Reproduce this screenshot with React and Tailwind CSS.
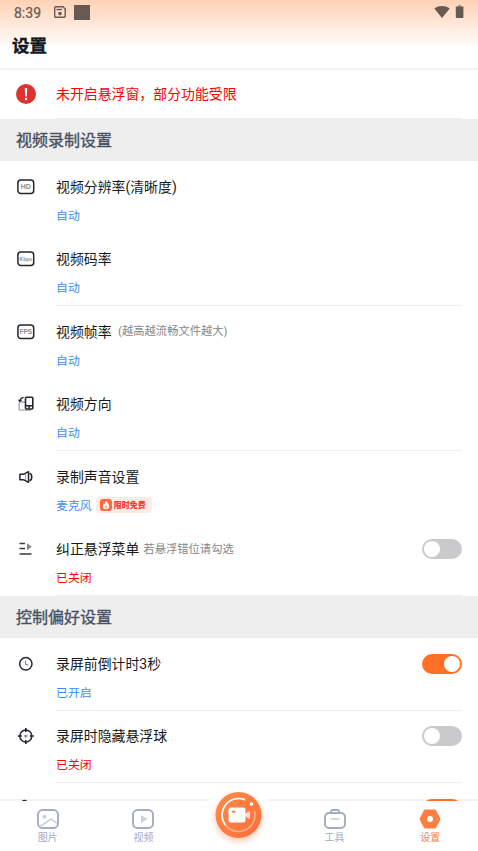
import React, { useState } from 'react';

const BoxIcon = ({ text, size = 6.5 }) => (
  <svg width="18" height="16" viewBox="0 0 18 16" fill="none">
    <rect x=".9" y="1" width="15.800" height="13.600" rx="3" stroke="#22262d" strokeWidth="1.500" />
    <text
      x="8.8"
      y={7.9 + size * 0.36}
      textAnchor="middle"
      fontSize={size}
      fontFamily="Liberation Sans, sans-serif"
      fontWeight="700"
      fill="#8a8d92"
    >
      {text}
    </text>
  </svg>
);

const RotateIcon = () => (
  <svg width="18" height="16" viewBox="0 0 18 16" fill="none">
    <path d="M8 6H3.200a1 1 0 0 0-1 1v6.200a1 1 0 0 0 1 1H14" stroke="#a3a5a9" strokeWidth="1.300" />
    <path d="M3 4.800C3.300 3 4.700 1.500 6.600 1.300M1.500 3.800l1.500 1.600 1.500-1.600" stroke="#22262d" strokeWidth="1.300" />
    <rect x="8.500" y="1.300" width="7.300" height="11.700" rx="1" stroke="#22262d" strokeWidth="1.600" />
    <path d="M8.500 9.700h7.300M12.100 10v2.500" stroke="#22262d" strokeWidth="1.500" />
  </svg>
);

const SpeakerIcon = () => (
  <svg width="18" height="16" viewBox="0 0 18 16" fill="none">
    <path d="M2.900 5.300h3.400l5.200-2.600v10.600l-5.200-2.600H2.900z" stroke="#22262d" strokeWidth="1.500" strokeLinejoin="round" />
    <path d="M12.500 4.200c3 1 3 6.600 0 7.600" stroke="#22262d" strokeWidth="1.600" />
    <path d="M8.500 5v6" stroke="#a3a5a9" strokeWidth="1" />
  </svg>
);

const MenuIcon = () => (
  <svg width="18" height="16" viewBox="0 0 18 16" fill="none">
    <path d="M2.500 2.500h5.500M2.500 7.500h5.500M2.500 13h12" stroke="#3a3d43" strokeWidth="1.400" />
    <path d="M10 2.200v7l4.800-3.500z" fill="#85878c" />
  </svg>
);

const ClockIcon = () => (
  <svg width="18" height="16" viewBox="0 0 18 16" fill="none">
    <circle cx="8.800" cy="7.800" r="6.200" stroke="#22262d" strokeWidth="1.500" />
    <path d="M8.500 4.500v3.800l2.800 1" stroke="#8a8d92" strokeWidth="1.100" />
  </svg>
);

const TargetIcon = () => (
  <svg width="18" height="16" viewBox="0 0 18 16" fill="none" overflow="visible">
    <circle cx="8.800" cy="8" r="6" stroke="#22262d" strokeWidth="1.500" />
    <path d="M8.800 0v4M8.800 12v4M.8 8h4M12.800 8h4" stroke="#22262d" strokeWidth="1.600" />
    <circle cx="8.800" cy="8" r="1.600" fill="#8a8d92" />
  </svg>
);

const TouchIcon = () => (
  <svg width="18" height="16" viewBox="0 0 18 16" fill="none" overflow="visible">
    <path d="M5.500 13V1.500a2 2 0 0 1 4 0V7l5 1.500V14" stroke="#22262d" strokeWidth="1.600" />
  </svg>
);

const videoSettings = [
  { title: '视频分辨率(清晰度)', value: '自动', icon: <BoxIcon text="HD" size={7} /> },
  { title: '视频码率', value: '自动', icon: <BoxIcon text="Kbps" size={5} />, divider: true },
  { title: '视频帧率', note: '(越高越流畅文件越大)', noteClass: 'ml-[6.5px]', value: '自动', icon: <BoxIcon text="FPS" size={6.5} /> },
  { title: '视频方向', value: '自动', icon: <RotateIcon />, divider: true },
  { title: '录制声音设置', value: '麦克风', icon: <SpeakerIcon />, badge: '限时免费' },
  { title: '纠正悬浮菜单', note: '若悬浮错位请勾选', noteClass: 'ml-1', value: '已关闭', icon: <MenuIcon />, toggle: false, divider: true },
];

const controlSettings = [
  { title: '录屏前倒计时3秒', value: '已开启', icon: <ClockIcon />, toggle: true, divider: true },
  { title: '录屏时隐藏悬浮球', value: '已关闭', icon: <TargetIcon />, toggle: false, divider: true },
  { title: '', value: '', icon: <TouchIcon />, toggle: true },
];

const Toggle = ({ initial }) => {
  const [on, setOn] = useState(initial);
  return (
    <button
      onClick={() => setOn(!on)}
      className={`flex h-5 w-10 shrink-0 items-center rounded-full px-[2px] ${
        on ? 'justify-end bg-[#ff6f26]' : 'justify-start bg-[#c9cacc]'
      }`}
    >
      <span className="h-4 w-4 rounded-full bg-white" />
    </button>
  );
};

const FreeBadge = ({ text }) => (
  <span className="mb-px ml-1 flex h-4 w-[56px] items-center gap-[2px] rounded bg-[#feebe6] pl-1">
    <svg width="12" height="12" viewBox="0 0 12 12">
      <rect width="12" height="12" rx="3" fill="#fb6b3d" />
      <path d="M6.300 1.800c.2 1.600 2.900 2.900 2.900 5.200A3.200 3.200 0 0 1 6 10.200 3.200 3.200 0 0 1 2.800 7c0-1.200.7-1.900 1.200-2.500.2.500.4.800.8.900 0-1.500.4-2.800 1.500-3.600z" fill="#fff" />
      <path d="M6 6.200c.8.800 1.200 1.300 1.200 2a1.200 1.200 0 0 1-2.400 0c0-.7.4-1.200 1.200-2z" fill="#fda78c" />
    </svg>
    <span className="pt-px text-[8px] leading-none font-black text-[#f33b2e]">{text}</span>
  </span>
);

const SettingRow = ({ item }) => (
  <div className="flex h-[72.5px] pr-4 pl-[17px]">
    <div className="w-[39px] shrink-0 pt-[17.5px]">{item.icon}</div>
    <div className={`flex-1 border-b pt-[15.5px] ${item.divider ? 'border-[#eeeeee]' : 'border-transparent'}`}>
      <div className="flex h-5 items-center">
        <span className="pt-px text-[13.9px] text-[#171a20]">{item.title}</span>
        {item.note && (
          <span className={`pt-[2px] text-[11.3px] text-[#868686] ${item.noteClass}`}>{item.note}</span>
        )}
        {item.toggle !== undefined && (
          <span className="ml-auto flex">
            <Toggle initial={item.toggle} />
          </span>
        )}
      </div>
      <div className="mt-[11px] flex h-4 items-center">
        <span className={`pt-[2px] text-[11.9px] ${item.value === '已关闭' ? 'text-[#ff0000]' : 'text-[#3c8ff2]'}`}>
          {item.value}
        </span>
        {item.badge && <FreeBadge text={item.badge} />}
      </div>
    </div>
  </div>
);

const Section = ({ title, items }) => (
  <section>
    <h2 className="flex h-[42px] items-center bg-[#eeeeee] px-4 pt-px text-base text-[#485163] [-webkit-text-stroke:0.35px_#485163]">
      {title}
    </h2>
    {items.map((item, i) => (
      <SettingRow key={i} item={item} />
    ))}
  </section>
);

const StatusBar = () => (
  <div className="flex h-6 items-center pr-[13px] pl-[14px] text-[#665a52]">
    <span className="w-10 pt-px font-[Roboto] text-sm leading-none [-webkit-text-stroke:0.2px]">8:39</span>
    <svg width="12" height="12" viewBox="0 0 12 12" fill="none" stroke="currentColor">
      <path d="M1.700.800h7.300l2.200 2.200v7.200a1 1 0 0 1-1 1H1.700a1 1 0 0 1-1-1V1.800a1 1 0 0 1 1-1z" strokeWidth="1.400" />
      <path d="M2.500 3.500h5.500" strokeWidth="1.400" />
      <circle cx="6" cy="7.600" r="1.800" fill="currentColor" stroke="none" />
    </svg>
    <span className="ml-2 h-[15px] w-[15.5px] bg-[#665a52]" />
    <svg className="ml-auto" width="16" height="13" viewBox="0 0 16 13" fill="currentColor">
      <path d="M8 12L.3 2.500C4.500-.8 11.500-.8 15.700 2.500z" />
    </svg>
    <svg className="mr-px ml-[5px]" width="9" height="14" viewBox="0 0 9 14" fill="currentColor">
      <path d="M3 0h3v2H3z" opacity=".5" />
      <rect x=".800" y="1.500" width="7.600" height="11.500" rx=".7" />
    </svg>
  </div>
);

const ImageIcon = () => (
  <svg width="22" height="20" viewBox="0 0 22 20" fill="none">
    <rect x="1" y="1" width="20" height="18" rx="4.500" stroke="#a2adc4" strokeWidth="1.900" />
    <circle cx="7.500" cy="7.800" r="2" fill="#c8cedb" />
    <path d="M3.500 17l11-7 6 5" stroke="#c8cedb" strokeWidth="1.500" />
  </svg>
);

const VideoIcon = () => (
  <svg width="22" height="20" viewBox="0 0 22 20" fill="none">
    <rect x="1" y="1" width="20" height="18" rx="4.500" stroke="#a2adc4" strokeWidth="1.900" />
    <path d="M9 6v8l6.500-4z" fill="#ccd2de" />
  </svg>
);

const ToolsIcon = () => (
  <svg width="22" height="20" viewBox="0 0 22 20" fill="none">
    <rect x="1" y="4" width="20" height="15" rx="4" stroke="#a2adc4" strokeWidth="1.900" />
    <path d="M7 4V2.500C7 1.500 7.500 1 8.500 1h5c1 0 1.500.5 1.500 1.500V4" stroke="#a2adc4" strokeWidth="1.900" />
    <path d="M6.500 10h9" stroke="#ccd2de" strokeWidth="1.700" />
  </svg>
);

const SettingsIcon = () => (
  <svg width="22" height="20" viewBox="0 0 22 20">
    <path d="M6.500.5h9c.8 0 1.300.3 1.700 1l3.800 7.200c.4.900.4 1.700 0 2.600l-3.800 7.200c-.4.700-.9 1-1.700 1h-9c-.8 0-1.300-.3-1.700-1L1 11.300c-.4-.9-.4-1.700 0-2.600l3.800-7.200c.4-.7.900-1 1.700-1z" fill="#fc7e42" />
    <circle cx="11" cy="10" r="3" fill="#fff" />
  </svg>
);

const NavItem = ({ icon, label, active }) => (
  <button className={`flex flex-1 flex-col items-center pt-2 ${active ? 'text-[#fc7e42]' : 'text-[#a2adc4]'}`}>
    {icon}
    <span className="mt-[2px] text-[10px] leading-[13px]">{label}</span>
  </button>
);

const RecordButton = () => (
  <div className="flex flex-1 justify-center">
    <button className="-mt-[15px] h-[60px] w-[60px] shrink-0">
      <svg width="60" height="60" viewBox="0.5 0 60 60" fill="none">
        <defs>
          <radialGradient id="glow">
            <stop offset=".75" stopColor="#fb6b35" stopOpacity=".25" />
            <stop offset="1" stopColor="#fb6b35" stopOpacity="0" />
          </radialGradient>
          <linearGradient id="disc" x1="0" y1="0" x2="1" y2="1">
            <stop stopColor="#ff8c48" />
            <stop offset="1" stopColor="#fb6d3b" />
          </linearGradient>
        </defs>
        {/* raised edge of the bar behind the button */}
        <path d="M0 14C9 13 11 0 30 0s21 13 30 14v3H0z" fill="#fff" />
        <circle cx="30" cy="32" r="28" fill="url(#glow)" />
        <circle cx="30" cy="29" r="23" fill="url(#disc)" />
        <path d="M36.500 13.800A16.500 16.500 0 1 0 46 25" stroke="#fff" strokeOpacity=".4" strokeWidth="1.600" />
        <path d="M36.500 13.800A16.500 16.500 0 0 0 17 39" stroke="#fff" strokeWidth="1.600" />
        <circle cx="43" cy="18" r="1.700" fill="#fff" />
        <rect x="20" y="21.500" width="17" height="15" rx="2" fill="#fff" />
        <path d="M38 26.500l3.500-1.500v8L38 31.500z" fill="#fff" fillOpacity=".7" />
        <path d="M37 27.500h1.500v3H37z" fill="#fff" />
        <rect x="23" y="24.800" width="4" height="1.700" rx=".8" fill="#fb7541" />
      </svg>
    </button>
  </div>
);

const App = () => {
  return (
    <div className="flex h-[851px] w-full flex-col overflow-hidden bg-white font-[Roboto,'Noto_Sans_CJK_SC',sans-serif]">
      <header className="h-[70px] shrink-0 border-b-2 border-[#f3f3f3] bg-linear-to-b from-[#ffd2b6] to-[#fffaf7] bg-[length:100%_45px] bg-no-repeat">
        <StatusBar />
        <h1 className="mt-2 pl-3 text-[17.5px] leading-7 font-bold text-[#14181f] [-webkit-text-stroke:0.4px]">设置</h1>
      </header>

      <main className="relative z-10 -mb-[2px] min-h-0 flex-1 overflow-hidden">
        <div className="flex h-[49px] items-center pr-4 pl-4">
          <svg className="mb-[2px]" width="20" height="20" viewBox="0 0 20 20">
            <circle cx="10" cy="10" r="10" fill="#dc3232" />
            <path d="M8.800 4h2.400l-.4 8.500H9.200z" fill="#fff" />
            <circle cx="10" cy="15" r="1.200" fill="#fff" />
          </svg>
          <div className="ml-5 flex h-full flex-1 items-center border-b border-[#eeeeee] text-[13.9px] text-[#ff0000]">
            未开启悬浮窗，部分功能受限
          </div>
        </div>
        <Section title="视频录制设置" items={videoSettings} />
        <Section title="控制偏好设置" items={controlSettings} />
      </main>

      <nav className="relative flex h-[52px] shrink-0 border-t-2 border-[#f3f3f3] bg-white">
        <NavItem icon={<ImageIcon />} label="图片" />
        <NavItem icon={<VideoIcon />} label="视频" />
        <RecordButton />
        <NavItem icon={<ToolsIcon />} label="工具" />
        <NavItem icon={<SettingsIcon />} label="设置" active />
      </nav>
    </div>
  );
};

export default App;
